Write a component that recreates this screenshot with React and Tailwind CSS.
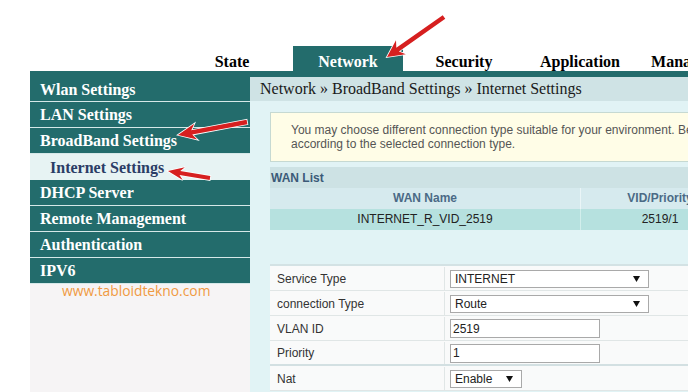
import React from "react";

const serif = { fontFamily: '"Liberation Serif", "Times New Roman", serif' };
const sans = { fontFamily: '"Liberation Sans", Arial, sans-serif' };

function arrowPoints(x1, y1, x2, y2, sw = 4.5, hl = 13, hw = 15) {
  const dx = x2 - x1, dy = y2 - y1, L = Math.hypot(dx, dy);
  const ux = dx / L, uy = dy / L, px = -uy, py = ux;
  const nx = x2 - ux * hl, ny = y2 - uy * hl;
  const bx = x2 - ux * (hl + 4), by = y2 - uy * (hl + 4);
  const pts = [
    [x1 + (px * sw) / 2, y1 + (py * sw) / 2],
    [nx + (px * sw) / 2, ny + (py * sw) / 2],
    [bx + (px * hw) / 2, by + (py * hw) / 2],
    [x2, y2],
    [bx - (px * hw) / 2, by - (py * hw) / 2],
    [nx - (px * sw) / 2, ny - (py * sw) / 2],
    [x1 - (px * sw) / 2, y1 - (py * sw) / 2],
  ];
  return pts.map((p) => p[0].toFixed(1) + "," + p[1].toFixed(1)).join(" ");
}

function Arrow({ x1, y1, x2, y2, sw, hl, hw }) {
  return (
    <polygon
      points={arrowPoints(x1, y1, x2, y2, sw, hl, hw)}
      fill="#d61f1f"
      stroke="#ffffff"
      strokeWidth="1.6"
      strokeLinejoin="miter"
      style={{ paintOrder: "stroke" }}
    />
  );
}

function Tri() {
  return (
    <svg width="7" height="6" viewBox="0 0 7 6">
      <polygon points="0,0 7,0 3.5,6" fill="#111" />
    </svg>
  );
}

function Select({ value, w }) {
  return (
    <div
      className={`flex h-[18px] items-center justify-between border border-[#a9a9a9] bg-white pl-[4px] pr-[8px] text-[12px] text-[#222] ${w}`}
      style={sans}
    >
      <span>{value}</span>
      <Tri />
    </div>
  );
}

function Input({ value }) {
  return (
    <div
      className="flex h-[19px] w-[150px] items-center border border-[#a9a9a9] bg-white pl-[2px] text-[12px] text-[#222]"
      style={sans}
    >
      {value}
    </div>
  );
}

const menu = ["LAN Settings", "BroadBand Settings"];
const menu2 = ["DHCP Server", "Remote Management", "Authentication", "IPV6"];

export default function App() {
  const rows = [
    { label: "Service Type", el: <Select value="INTERNET" w="w-[199px]" /> },
    { label: "connection Type", el: <Select value="Route" w="w-[199px]" /> },
    { label: "VLAN ID", el: <Input value="2519" /> },
    { label: "Priority", el: <Input value="1" /> },
    { label: "Nat", el: <Select value="Enable" w="w-[72px]" /> },
  ];
  return (
    <div className="relative h-[392px] w-[688px] overflow-hidden bg-white">
      {/* top nav */}
      <div className="flex h-[71px] items-end gap-[6px] pl-[177px]" style={serif}>
        {["State", "Network", "Security", "Application", "Management"].map((t) => (
          <div
            key={t}
            className={`h-[25px] w-[110px] shrink-0 whitespace-nowrap pt-[6px] text-center text-[16px] font-bold leading-[19px] ${
              t === "Network" ? "bg-[#236c6c] text-white" : "text-black"
            }`}
          >
            {t}
          </div>
        ))}
      </div>

      <div className="flex pl-[30px]">
        {/* sidebar */}
        <aside className="flex h-[321px] w-[220px] shrink-0 flex-col bg-[#f6f4f5]" style={serif}>
          <div className="h-[31px] border-b border-[#d6e8e8] bg-[#236c6c] pl-[10px] pt-[7px] text-[16px] font-bold leading-[23px] text-white">
            Wlan Settings
          </div>
          {menu.map((m) => (
            <div
              key={m}
              className="h-[26px] border-b border-[#d6e8e8] bg-[#236c6c] pl-[10px] pt-[1px] text-[16px] font-bold leading-[24px] text-white"
            >
              {m}
            </div>
          ))}
          <div className="h-[26px] bg-[#e7f3f3] pl-[20px] pt-[1px] text-[16px] font-bold leading-[25px] text-[#2b3d66]">
            Internet Settings
          </div>
          {menu2.map((m) => (
            <div
              key={m}
              className="h-[26px] border-b border-[#d6e8e8] bg-[#236c6c] pl-[10px] pt-[1px] text-[16px] font-bold leading-[24px] text-white last:border-b-0"
            >
              {m}
            </div>
          ))}
          <div
            className="pl-[32px] text-[13.8px] leading-[14px] text-[#f09a42]"
            style={{ fontFamily: '"Open Sans", "Noto Sans", sans-serif' }}
          >
            www.tabloidtekno.com
          </div>
        </aside>

        {/* main */}
        <main className="flex h-[321px] w-[438px] shrink-0 flex-col overflow-hidden bg-[#e1f3f5]">
          <div className="h-[6px] shrink-0 bg-[#236c6c]" />
          <div
            className="h-[24px] shrink-0 whitespace-nowrap bg-[#cfe3e5] pl-[10px] text-[16px] leading-[24px] text-[#1a1a1a]"
            style={serif}
          >
            Network » BroadBand Settings » Internet Settings
          </div>
          <div className="flex w-[560px] flex-col pl-[20px] pt-[11px]" style={sans}>
            <div className="h-[50px] border border-[#c6d9d2] bg-[#fffde7] pl-[20px] pt-[10px] text-[12px] leading-[14px] text-[#555]">
              <div className="whitespace-nowrap">
                You may choose different connection type suitable for your environment. Besides, configure the parameters
              </div>
              <div className="whitespace-nowrap">according to the selected connection type.</div>
            </div>

            <div className="mt-[5px] h-[21px] bg-[#cde2e4] pl-[1px] pt-[1px] text-[12px] font-bold leading-[20px] text-[#3b5a78]">
              WAN List
            </div>
            <div className="flex h-[21px] bg-[#d6eaee] text-[12px] font-bold leading-[21px] text-[#4b6a86]">
              <div className="w-[311px] border-r border-[#eaf5f7] text-center">WAN Name</div>
              <div className="w-[158px] text-center">VID/Priority</div>
            </div>
            <div className="flex h-[21px] bg-[#b6e1df] text-[12px] leading-[21px] text-[#222]">
              <div className="w-[311px] border-r border-[#d2eeec] text-center">INTERNET_R_VID_2519</div>
              <div className="w-[158px] text-center">2519/1</div>
            </div>

            <div className="mt-[34px] flex flex-col border-t-2 border-[#d3e2e4] bg-[#f9fafa]">
              {rows.map((r, i) => (
                <div
                  key={r.label}
                  className={`flex h-[25px] border-b pt-[1px] ${i === 3 ? "border-b-2 border-[#d3e0e2]" : "border-[#e0e6e6]"}`}
                >
                  <div className="flex w-[175px] items-center border-r border-[#e0e6e6] pl-[7px] text-[12px] text-[#333]">
                    {r.label}
                  </div>
                  <div className="flex items-center pl-[5px]">{r.el}</div>
                </div>
              ))}
            </div>
          </div>
        </main>
      </div>

      {/* annotation arrows */}
      <svg className="pointer-events-none absolute left-0 top-0" width="688" height="392">
        <Arrow x1={444} y1={17} x2={387} y2={57} sw={4.5} hl={13} hw={17} />
        <Arrow x1={247} y1={122} x2={178} y2={135} sw={4.5} hl={14} hw={16} />
        <Arrow x1={210} y1={178} x2={168} y2={171} sw={4} hl={12} hw={13} />
      </svg>
    </div>
  );
}
